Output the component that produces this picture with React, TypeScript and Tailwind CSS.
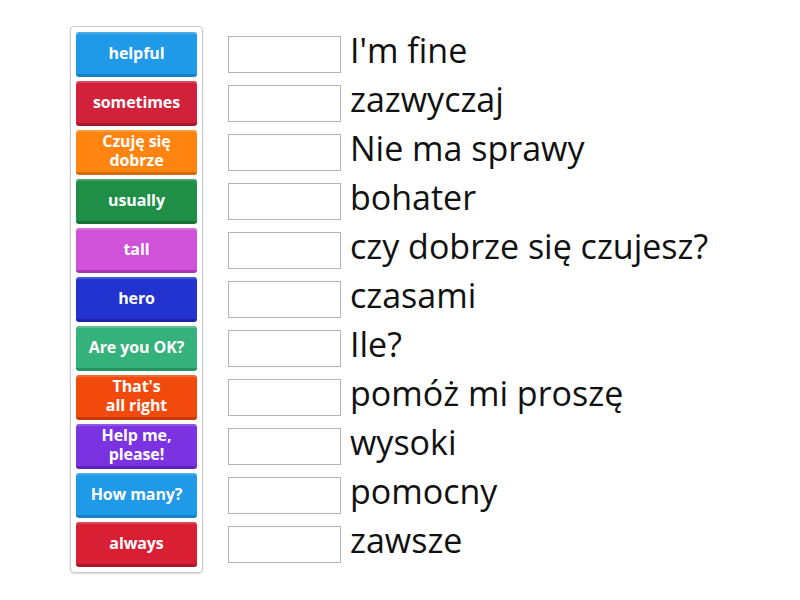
import React from 'react'

const tiles = [
    { label: 'helpful', bg: 'bg-[#1f9ae8]', edge: 'border-[#1782c9]' },
    { label: 'sometimes', bg: 'bg-[#d2213b]', edge: 'border-[#a8172b]' },
    { label: 'Czuję się dobrze', bg: 'bg-[#ff8410]', edge: 'border-[#d96a00]' },
    { label: 'usually', bg: 'bg-[#1f8f47]', edge: 'border-[#177136]' },
    { label: 'tall', bg: 'bg-[#d052d8]', edge: 'border-[#ad35b5]' },
    { label: 'hero', bg: 'bg-[#2233d0]', edge: 'border-[#1a26a8]' },
    { label: 'Are you OK?', bg: 'bg-[#35b27c]', edge: 'border-[#279363]' },
    { label: "That's all right", bg: 'bg-[#f24a0c]', edge: 'border-[#c73a05]' },
    { label: 'Help me, please!', bg: 'bg-[#7b33e2]', edge: 'border-[#5f22bd]' },
    { label: 'How many?', bg: 'bg-[#1f9ae8]', edge: 'border-[#1782c9]' },
    { label: 'always', bg: 'bg-[#d81f33]', edge: 'border-[#ad1425]' },
]

const words = [
    "I'm fine",
    'zazwyczaj',
    'Nie ma sprawy',
    'bohater',
    'czy dobrze się czujesz?',
    'czasami',
    'Ile?',
    'pomóż mi proszę',
    'wysoki',
    'pomocny',
    'zawsze',
]

export default function App() {
    return (
        <div
            className="w-[800px] h-[600px] bg-white flex items-start pt-[26px] pl-[70px]"
            style={{ fontFamily: '"Open Sans", "Noto Sans", sans-serif' }}
        >
            {/* answer tiles */}
            <div className="flex flex-col gap-[4px] p-[5px] border border-[#c8c8c8] rounded-[4px] shadow-[0_1px_2px_rgba(0,0,0,0.15)]">
                {tiles.map((t) => (
                    <div
                        key={t.label}
                        className={`w-[121px] h-[45px] rounded-[3px] border-b-[3px] ${t.bg} ${t.edge} flex items-center justify-center text-center px-1 shadow-[inset_0_2px_0_rgba(255,255,255,0.18)]`}
                    >
                        <span className="text-white font-bold text-[16px] leading-[19px] tracking-[-0.1px]">
                            {t.label === 'Czuję się dobrze' ? (
                                <>Czuję się<br />dobrze</>
                            ) : t.label === "That's all right" ? (
                                <>That's<br />all right</>
                            ) : t.label === 'Help me, please!' ? (
                                <>Help me,<br />please!</>
                            ) : (
                                t.label
                            )}
                        </span>
                    </div>
                ))}
            </div>

            {/* targets */}
            <div className="flex flex-col gap-[4px] mt-[6px] ml-[25px]">
                {words.map((w) => (
                    <div key={w} className="h-[45px] flex items-center">
                        <div className="w-[113px] h-[37px] border border-[#b4b4b4] bg-white" />
                        <span className="ml-[9px] text-[34px] leading-none text-[#111] pb-[9px]">{w}</span>
                    </div>
                ))}
            </div>
        </div>
    )
}
